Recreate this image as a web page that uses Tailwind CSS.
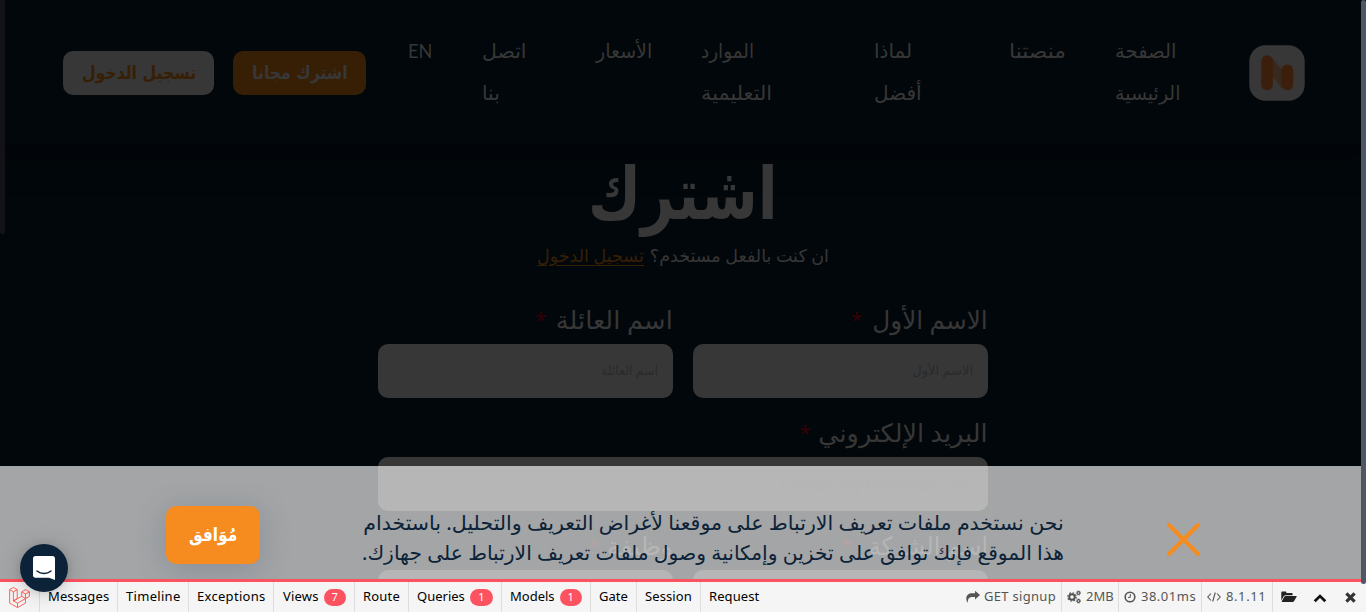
<!DOCTYPE html>
<html lang="ar">
<head>
<meta charset="utf-8">
<title>اشترك</title>
<script src="https://cdn.jsdelivr.net/npm/@tailwindcss/browser@4"></script>
</head>
<body class="relative h-[612px] overflow-hidden bg-[#02070b] font-['Noto_Sans','DejaVu_Sans',sans-serif] text-[#373737]">

<header class="relative flex h-[143px] w-[1361px] items-start pl-[63px] shadow-[0_8px_30px_rgba(1,2,6,.6)]">
  <a class="mt-[51px] flex h-11 w-[151px] items-center justify-center rounded-[10px] bg-[#373737] font-['DejaVu_Sans'] text-[18.7px] font-bold text-[#371f06]" dir="rtl"><span class="scale-x-[.84] whitespace-nowrap">تسجيل الدخول</span></a>
  <a class="mt-[51px] ml-[19px] flex h-11 w-[133px] items-center justify-center rounded-[10px] bg-[#371f06] font-['DejaVu_Sans'] text-[18.7px] font-bold text-[#373737]" dir="rtl"><span class="scale-x-[.84] whitespace-nowrap">اشترك مجانا</span></a>
  <nav class="ml-[42px] flex pt-[30px] text-[20px] leading-[42px] whitespace-nowrap">
    <div class="flex w-[74px] font-[Lato] text-[19.5px]"><span class="origin-left scale-x-[.93]">EN</span></div>
    <div class="flex w-[114px] flex-col items-start"><span class="origin-left scale-x-[1.02]">اتصل</span><span>بنا</span></div>
    <div class="flex w-[105px] flex-col items-start"><span class="origin-left scale-x-[.95]">الأسعار</span></div>
    <div class="flex w-[173px] flex-col items-start"><span class="origin-left scale-x-[.92]">الموارد</span><span class="origin-left scale-x-[1.04]">التعليمية</span></div>
    <div class="flex w-[135px] flex-col items-start"><span>لماذا</span><span>أفضل</span></div>
    <div class="flex w-[106px] flex-col items-start"><span class="origin-left scale-x-[1.09]">منصتنا</span></div>
    <div class="flex w-[134px] flex-col items-start"><span class="origin-left scale-x-[.98]">الصفحة</span><span class="origin-left scale-x-[.95]">الرئيسية</span></div>
  </nav>
  <svg class="mt-[45px] size-14 shrink-0" viewBox="0 0 56 56">
    <rect x=".3" y=".2" width="55.4" height="55.6" rx="16" fill="#373737"/>
    <path d="M22.500 12.500 34 26v17.500c-1.500-.5-2.500-1.500-3.500-3L22.500 30z" fill="#38281e"/>
    <rect x="12.3" y="10.3" width="11.7" height="35" rx="5.8" fill="#3b1f0c"/>
    <rect x="32.5" y="19.6" width="11.7" height="25.7" rx="5.8" fill="#3b1f0c"/>
  </svg>
</header>

<main class="mx-auto w-[610px]" dir="rtl">
  <h1 class="flex h-[94px] items-center justify-center pt-[7px] font-['DejaVu_Sans'] text-[72px] leading-none font-bold"><span class="scale-x-[.805]">اشترك</span></h1>
  <p class="flex h-9 items-center justify-center gap-[6px] text-[17.5px]"><span>ان كنت بالفعل مستخدم؟</span><a class="font-medium text-[#371f06] underline underline-offset-3">تسجيل الدخول</a></p>
  <form class="mt-6 grid grid-cols-2 gap-x-5 text-[25.2px]">
    <div class="h-[113px]">
      <label class="flex h-[46px] items-center gap-2"><span class="origin-right scale-x-[.98]">الاسم الأول</span><span class="text-[20px] text-[#370003]">*</span></label>
      <div class="mt-px flex h-[54px] items-center rounded-[10px] bg-[#373737] px-[15px] text-[13px] text-[#282a2c]">الاسم الأول</div>
    </div>
    <div class="h-[113px]">
      <label class="flex h-[46px] items-center gap-[9px]"><span class="origin-right scale-x-[1.02]">اسم العائلة</span><span class="mr-[3px] text-[20px] text-[#370003]">*</span></label>
      <div class="mt-px flex h-[54px] items-center rounded-[10px] bg-[#373737] px-[15px] text-[12.5px] text-[#282a2c]">اسم العائلة</div>
    </div>
    <div class="col-span-2 h-[113px]">
      <label class="flex h-[46px] items-center gap-2"><span class="origin-right scale-x-[1.01]">البريد الإلكتروني</span><span class="mr-[2px] text-[20px] text-[#370003]">*</span></label>
      <div class="mt-px flex h-[54px] items-center rounded-[10px] bg-[#373737] px-[15px] font-[Lato] text-[15px] text-[#2f3031]">email@companyexample.com</div>
    </div>
    <div class="h-[113px]">
      <label class="flex h-[46px] items-center gap-2"><span class="origin-right scale-x-[.93]">اسم الشركة</span><span class="text-[20px] text-[#370003]">*</span></label>
      <div class="mt-px h-[54px] rounded-[10px] bg-[#373737]"></div>
    </div>
    <div class="h-[113px]">
      <label class="flex h-[46px] items-center gap-2"><span>وظيفة</span><span class="text-[20px] text-[#370003]">*</span></label>
      <div class="mt-px h-[54px] rounded-[10px] bg-[#373737]"></div>
    </div>
  </form>
</main>

<div class="absolute top-0 left-0 h-[234px] w-[5px] rounded-b bg-[#131317]"></div>

<section class="absolute top-[466px] left-0 flex h-[113px] w-[1361px] items-start overflow-hidden bg-white/64 pl-[166px]">
  <button class="mt-10 flex h-[58px] w-[94px] items-center justify-center rounded-[10px] bg-[#f68b1f] font-['DejaVu_Sans'] text-[18.5px] font-bold text-white shadow-[0_5px_30px_rgba(60,70,110,.25)]"><span class="scale-x-[.83]">مُوَافق</span></button>
  <p class="mt-[42px] ml-[103px] flex w-[701px] flex-col items-start text-[20px] leading-[30px] whitespace-nowrap text-[#0c2238]" dir="rtl">
    <span class="origin-right scale-x-[1.026]">نحن نستخدم ملفات تعريف الارتباط على موقعنا لأغراض التعريف والتحليل. باستخدام</span>
    <span class="origin-right scale-x-[1.013]">هذا الموقع فإنك توافق على تخزين وإمكانية وصول ملفات تعريف الارتباط على جهازك.</span>
  </p>
  <svg class="mt-[57px] ml-[103px] size-[33px]" viewBox="0 0 33 33" fill="none" stroke="#f68b1f" stroke-width="4" stroke-linecap="round"><path d="M2 2 31 31M31 2 2 31"/></svg>
</section>

<footer class="absolute top-[579px] left-0 flex h-[33px] w-full border-t-[3px] border-[#fd5260] bg-[#f5f5f5] text-[13px] leading-[29px] whitespace-nowrap text-black">
  <div class="flex w-10 border-r border-[#ddd] pt-[5px] pl-[9px]">
    <svg class="size-[21px]" viewBox="0 0 24 24" fill="none" stroke="#ff4a3d" stroke-width=".95" stroke-linejoin="round"><path d="M.7 3 5 .5 9.400 3 5 5.500zM.7 3v15.400l9 5.100 9.100-5.100v-5.200l4.500-2.500V5.500L18.900 3l-4.400 2.500 4.400 2.500 4.400-2.500M5 5.500v10.400l4.700 2.600 9.100-5.200V8M9.400 3v10.400L5 15.900M9.700 18.500v5M14.500 5.500v5.200l4.300 2.500M14.500 10.700 5 15.900"/></svg>
  </div>
  <div class="w-[78px] border-r border-[#ddd] pl-2 tracking-[.1px]">Messages</div>
  <div class="w-[71px] border-r border-[#ddd] pl-2 tracking-[.3px]">Timeline</div>
  <div class="w-[85px] border-r border-[#ddd] pl-2 tracking-[.3px]">Exceptions</div>
  <div class="flex w-[81px] items-start border-r border-[#ddd] pl-[9px] tracking-[.2px]">Views<span class="mt-[7px] ml-[5px] h-[17px] w-[22px] rounded-full bg-[#fd5260] text-center text-[11px] leading-4 text-white">7</span></div>
  <div class="w-[54px] border-r border-[#ddd] pl-2 tracking-[.2px]">Route</div>
  <div class="flex w-[93px] items-start border-r border-[#ddd] pl-2">Queries<span class="mt-[7px] ml-[5px] h-[17px] w-[23px] rounded-full bg-[#fd5260] text-center text-[11px] leading-4 text-white">1</span></div>
  <div class="flex w-[89px] items-start border-r border-[#ddd] pl-2">Models<span class="mt-[7px] ml-[5px] h-[17px] w-[22px] rounded-full bg-[#fd5260] text-center text-[11px] leading-4 text-white">1</span></div>
  <div class="w-[46px] border-r border-[#ddd] pl-2">Gate</div>
  <div class="w-[64px] border-r border-[#ddd] pl-2 tracking-[.1px]">Session</div>
  <div class="pl-2 tracking-[.1px]">Request</div>
  <div class="ml-auto flex text-[#555]">
    <div class="flex w-[96px] items-start gap-1 border-r border-[#ddd] tracking-[.3px]">
      <svg class="mt-2 size-[14px]" viewBox="0 0 14 14" fill="#555"><path d="M14 5 9 .8v2.500H6.500C2.500 3.300.3 5.300.3 8.600c0 1.700.6 3.200 1.400 4.400C1.600 8.500 3.500 7 6.500 7H9v2.400z"/></svg>GET signup</div>
    <div class="flex w-[57px] items-start gap-[5px] border-r border-[#ddd] pl-[5px]">
      <svg class="mt-2 size-[14px] shrink-0" viewBox="0 0 14 14" fill="none" stroke="#555"><circle cx="5" cy="7" r="2.800" stroke-width="2"/><circle cx="5" cy="7" r="4.200" stroke-width="1.200" stroke-dasharray="1.650 1.650"/><circle cx="11.500" cy="3" r="1.400" stroke-width="1.200"/><circle cx="11.500" cy="3" r="2.200" stroke-width=".7" stroke-dasharray=".9 .8"/><circle cx="11.500" cy="11" r="1.400" stroke-width="1.200"/><circle cx="11.500" cy="11" r="2.200" stroke-width=".7" stroke-dasharray=".9 .8"/></svg>2MB</div>
    <div class="flex w-[83px] items-start gap-[5px] border-r border-[#ddd] pl-[5px] tracking-[.5px]">
      <svg class="mt-[9px] size-3 shrink-0" viewBox="0 0 12 12" fill="none" stroke="#555"><circle cx="6" cy="6" r="4.800" stroke-width="1.600"/><path d="M6.300 3v3.400H4"/></svg>38.01ms</div>
    <div class="flex w-[71px] items-start gap-[5px] border-r border-[#ddd] pl-[5px] tracking-[.6px]">
      <svg class="mt-[9px] h-3 w-[14px] shrink-0" viewBox="0 0 14 12" fill="none" stroke="#555" stroke-width="1.100"><path d="M4 2.500.8 6 4 9.500M10 2.500 13.200 6 10 9.500M8.300 1.500 5.700 10.500"/></svg>8.1.11</div>
    <div class="flex w-[93px] items-center pl-2">
      <svg class="h-3 w-4" viewBox="0 0 16 12" fill="#222"><path d="M.3 9.500V1.600C.3.900.8.500 1.400.500h3c.6 0 1 .4 1 1v.5h5.200c.6 0 1 .4 1 1v1.200H4.700c-.8 0-1.500.3-2 1zM4.700 5h10.500c.5 0 .7.400.400.800l-2.600 4.500c-.3.500-.8.700-1.300.700H1.200c-.5 0-.7-.3-.4-.8L3.300 5.700c.3-.4.800-.7 1.400-.7z"/></svg>
      <svg class="mt-[2px] ml-4 h-[9px] w-[14px]" viewBox="0 0 14 9" fill="none" stroke="#111" stroke-width="2.800"><path d="m1.700 7.300 5.300-5.200 5.300 5.200"/></svg>
      <svg class="ml-[18px] size-[11px]" viewBox="0 0 11 11" fill="none" stroke="#333" stroke-width="3.200"><path d="m1.400 1.400 8.200 8.200M9.600 1.400 1.400 9.600"/></svg>
    </div>
  </div>
</footer>

<div class="absolute top-[544px] left-5 flex size-12 items-center justify-center rounded-full bg-[#0c2238] shadow-[0_1px_8px_rgba(0,0,0,.12),0_2px_24px_rgba(0,0,0,.16)]">
  <svg class="h-6 w-[22px]" viewBox="0 0 22 24"><path d="M2.500 0h17C21 0 22 1 22 2.500V24l-6-2.300H2.500C1 21.700 0 20.700 0 19.200V2.500C0 1 1 0 2.500 0z" fill="#fff"/><path d="M4 15c4 3.200 10 3.200 14 0" fill="none" stroke="#0c2238" stroke-width="1.500" stroke-linecap="round"/></svg>
</div>

<div class="absolute top-0 right-0 h-[584px] w-[5px] rounded-full bg-[#4f5767]"></div>
</body>
</html>
